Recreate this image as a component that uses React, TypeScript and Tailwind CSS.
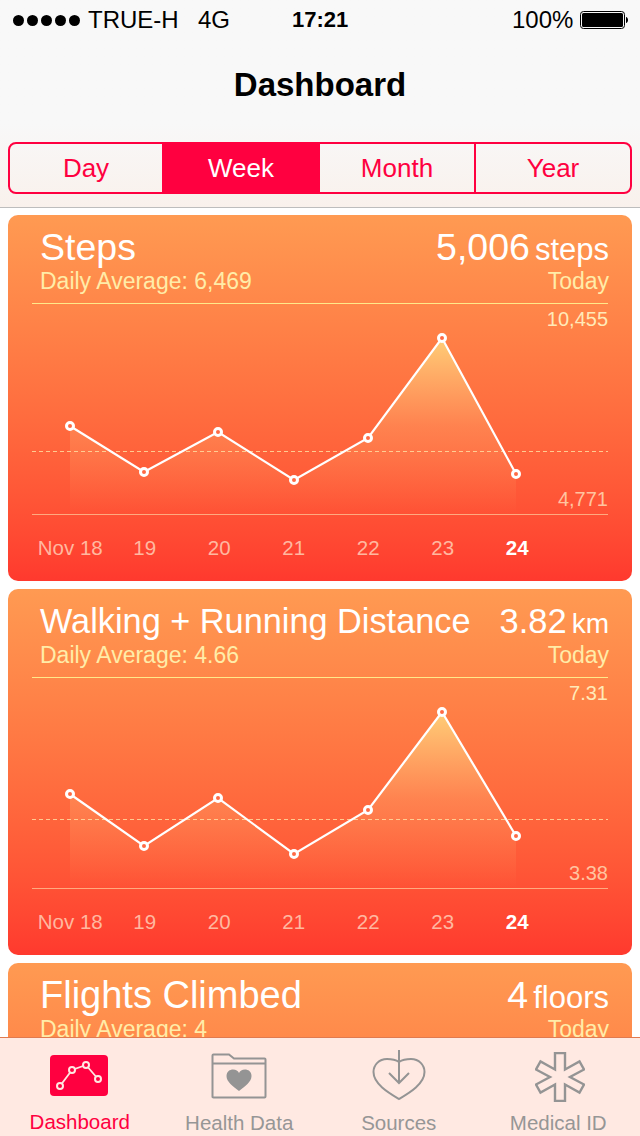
const FONT = "font-['Liberation_Sans',Arial,sans-serif]";

interface CardData {
  title: string;
  titleClass: string;
  value: string;
  valueClass: string;
  unit: string;
  unitClass: string;
  average: string;
  max?: string;
  min?: string;
  points?: number[][];
  dashY?: number;
}

// y values are relative to the top rule of the chart
const cards: CardData[] = [
  {
    title: "Steps",
    titleClass: "text-[37.5px]",
    value: "5,006",
    valueClass: "text-[37.5px]",
    unit: "steps",
    unitClass: "text-[31px]",
    average: "Daily Average: 6,469",
    max: "10,455",
    min: "4,771",
    points: [[38, 123], [112, 169], [186, 129], [262, 177], [336, 135], [410, 35], [484, 171]],
    dashY: 148,
  },
  {
    title: "Walking + Running Distance",
    titleClass: "text-[34.3px]",
    value: "3.82",
    valueClass: "text-[34.5px]",
    unit: "km",
    unitClass: "text-[28px]",
    average: "Daily Average: 4.66",
    max: "7.31",
    min: "3.38",
    points: [[38, 117], [112, 169], [186, 121], [262, 177], [336, 133], [410, 35], [484, 159]],
    dashY: 142,
  },
  {
    title: "Flights Climbed",
    titleClass: "text-[38px]",
    value: "4",
    valueClass: "text-[37.5px]",
    unit: "floors",
    unitClass: "text-[31px]",
    average: "Daily Average: 4",
  },
];

const days = ["Nov 18", "19", "20", "21", "22", "23", "24"];

function Chart({ card, id }: { card: CardData; id: string }) {
  const pts = card.points ?? [];
  const line = pts.map((p) => p.join(",")).join(" ");
  const area = `38,211 ${line} 484,211`;
  return (
    <svg width="576" height="212" className="block" fill="none">
      <defs>
        <linearGradient id={id} gradientUnits="userSpaceOnUse" x1="0" y1="35" x2="0" y2="211">
          <stop offset="0" stopColor="#ffd27a" stopOpacity="0.95" />
          <stop offset="0.5" stopColor="#ffb070" stopOpacity="0.35" />
          <stop offset="1" stopColor="#ffb070" stopOpacity="0" />
        </linearGradient>
      </defs>
      <path d="M0 0.5H576" stroke="#ffe98a" />
      <path d="M0 211.5H576" stroke="#ffd0a0" strokeOpacity="0.7" />
      <polygon points={area} fill={`url(#${id})`} />
      <path d={`M0 ${(card.dashY ?? 0) + 0.5}H576`} stroke="#ffdca0" strokeOpacity="0.85" strokeDasharray="4 3" />
      <polyline points={line} stroke="#fff" strokeWidth="2.2" />
      {pts.map((p) => (
        <circle key={p[0]} cx={p[0]} cy={p[1]} r="3.5" fill="#ff6a45" stroke="#fff" strokeWidth="3" />
      ))}
    </svg>
  );
}

function Card({ card, id }: { card: CardData; id: string }) {
  return (
    <div className="h-[366px] shrink-0 rounded-[10px] bg-gradient-to-b from-[#ff9a52] to-[#ff392e] text-white">
      <div className="flex items-start justify-between pl-8 pr-[23px] pt-[10px]">
        <div>
          <div className={`h-[44px] whitespace-nowrap leading-[44px] ${card.titleClass}`}>{card.title}</div>
          <div className="h-[28px] text-[23px] leading-[24px] text-[#ffeca8]">{card.average}</div>
        </div>
        <div className="text-right">
          <div className="h-[44px] whitespace-nowrap leading-[44px]">
            <span className={card.valueClass}>{card.value}</span>
            <span className={`ml-[5px] ${card.unitClass}`}>{card.unit}</span>
          </div>
          <div className="h-[28px] text-[23px] leading-[24px] text-[#ffeca8]">Today</div>
        </div>
      </div>
      {card.points && (
        <>
          <div className="relative mx-6 mt-[6px]">
            <Chart card={card} id={id} />
            <span className="absolute right-0 top-[4px] text-[20px] leading-6 text-[#ffeab8]">{card.max}</span>
            <span className="absolute bottom-[4px] right-0 text-[20px] leading-6 text-[#ffc4a0]">{card.min}</span>
          </div>
          <div className="mt-[21px] flex pl-[25px] text-[20.5px] leading-6 text-[#ffb8a0]">
            {days.map((d) => (
              <span
                key={d}
                className={d === "24" ? "w-[74.5px] text-center font-bold text-white" : "w-[74.5px] whitespace-nowrap text-center"}
              >
                {d}
              </span>
            ))}
          </div>
        </>
      )}
    </div>
  );
}

function BatteryIcon() {
  return (
    <svg width="48" height="18" viewBox="0 0 48 18" fill="none">
      <rect x="0.5" y="0.5" width="44" height="17" rx="3" stroke="#000" />
      <rect x="2" y="2" width="41" height="14" rx="1.5" fill="#000" />
      <path d="M46 6c1.2.3 2 1.4 2 3s-.8 2.7-2 3z" fill="#000" />
    </svg>
  );
}

export default function App() {
  return (
    <div className={`${FONT} flex h-[1136px] w-[640px] flex-col overflow-hidden bg-white`}>
      <div className="h-[208px] shrink-0 border-b border-[#bdbdbd] bg-gradient-to-b from-[#f8f8f8] from-60% to-[#f9f1ec]">
        <div className="flex h-[40px] items-center pl-[13px] pr-[12px] text-[24px] leading-none text-black">
          <div className="flex w-[75px] gap-[3px]">
            {[0, 1, 2, 3, 4].map((i) => (
              <span key={i} className="h-[11px] w-[11px] rounded-full bg-black" />
            ))}
          </div>
          <span className="w-[110px] whitespace-nowrap">TRUE-H</span>
          <span className="w-[94px]">4G</span>
          <span className="w-[220px] text-[22px] font-bold">17:21</span>
          <span className="w-[68px]">100%</span>
          <BatteryIcon />
        </div>
        <div className="flex h-[88px] items-center justify-center text-[33px] font-bold leading-none text-black">
          Dashboard
        </div>
        <div className="mx-2 mt-[14px] flex h-[52px] overflow-hidden rounded-[8px] border-2 border-[#ff0040] text-[26px] text-[#ff0040]">
          <div className="flex w-[152px] items-center justify-center">Day</div>
          <div className="flex w-[158px] items-center justify-center bg-[#ff0040] text-white">Week</div>
          <div className="flex w-[154px] items-center justify-center">Month</div>
          <div className="flex flex-1 items-center justify-center border-l-2 border-[#ff0040]">Year</div>
        </div>
      </div>

      <div className="flex min-h-0 flex-1 flex-col gap-2 overflow-hidden px-2 pt-[7px]">
        {cards.map((c, i) => (
          <Card key={c.title} card={c} id={`area${i}`} />
        ))}
      </div>

      <div className="grid h-[99px] shrink-0 grid-cols-4 border-t border-[#e07a50] bg-[#ffe9e2] pr-[2px] text-[20.5px] leading-6 text-[#969696]">
        <div className="flex flex-col items-center text-[#ff0040]">
          <svg width="58" height="41" viewBox="0 0 58 41" className="mt-[17px] -translate-x-px" fill="none">
            <rect width="58" height="41" rx="4" fill="#ff0040" />
            <path d="M10 31 22 15 36 10 48 24" stroke="#ffe9e2" strokeWidth="1.8" />
            <g fill="#ff0040" stroke="#ffe9e2" strokeWidth="2">
              <circle cx="10" cy="31" r="3" />
              <circle cx="22" cy="15" r="3" />
              <circle cx="36" cy="10" r="3" />
              <circle cx="48" cy="24" r="3" />
            </g>
          </svg>
          <span className="mt-[14px]">Dashboard</span>
        </div>
        <div className="flex flex-col items-center">
          <svg width="56" height="46" viewBox="0 0 56 46" className="mt-[15px]" fill="none">
            <path d="M1.5 44.5V2.5Q1.5 1.5 2.5 1.5H18L23 5.5H53.5Q54.5 5.5 54.5 6.5V43.5Q54.5 44.5 53.5 44.5H2.5Q1.5 44.5 1.5 43.5V10.5H54.5" stroke="#949494" strokeWidth="2" />
            <path d="M28 38C22 33 15.5 29 15.5 23C15.5 18.5 19 16.5 22 16.5C25 16.5 27 18 28 20C29 18 31 16.5 34 16.5C37 16.5 40.5 18.5 40.5 23C40.5 29 34 33 28 38Z" fill="#949494" />
          </svg>
          <span className="mt-[12px]">Health Data</span>
        </div>
        <div className="flex flex-col items-center">
          <svg width="54" height="52" viewBox="0 0 54 52" className="mt-[12px]" fill="none" stroke="#949494" strokeWidth="2">
            <path d="M27 12C24 10 20 9 15 9C7 9 1.5 15 1.5 22C1.5 34 17 43 27 49C37 43 52.5 34 52.5 22C52.5 15 47 9 39 9C34 9 30 10 27 12Z" />
            <path d="M27 0V33M17 23 27 33 37 23" />
          </svg>
          <span className="mt-[9px]">Sources</span>
        </div>
        <div className="flex flex-col items-center">
          <svg width="50" height="50" viewBox="0 0 50 50" className="mt-[14px] translate-x-[2px]" fill="none" stroke="#949494" strokeWidth="2.4">
            <path d="M20 1H30V17.5L44.5 9.5 49 17.5 35 25 49 32.5 44.5 40.5 30 32.5V49H20V32.5L5.5 40.5 1 32.5 15 25 1 17.5 5.5 9.5 20 17.5Z" />
          </svg>
          <span className="mt-[9px]">Medical ID</span>
        </div>
      </div>
    </div>
  );
}
